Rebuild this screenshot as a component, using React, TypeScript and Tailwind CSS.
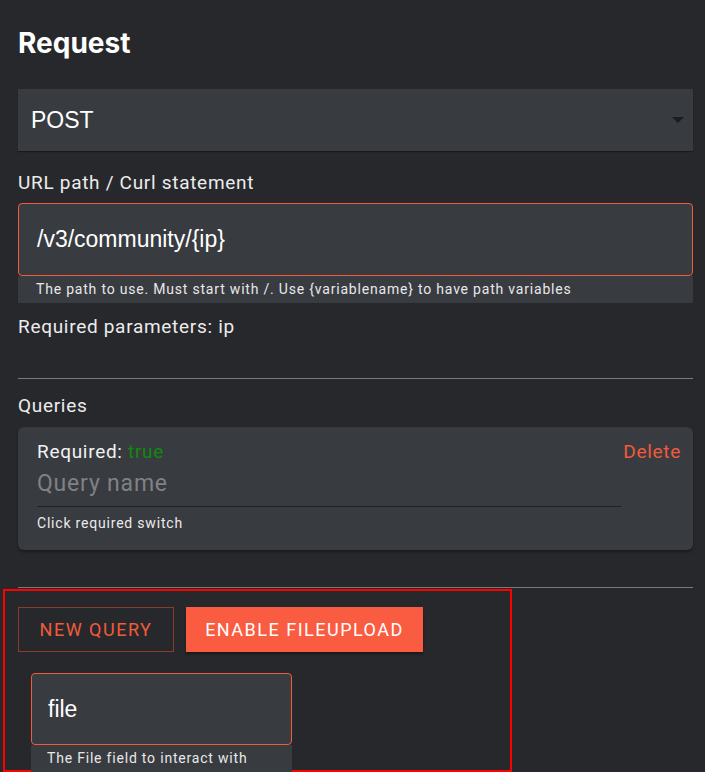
import React from "react";

export default function App() {
  return (
    <div className="min-h-[772px] w-[705px] overflow-hidden bg-[#27282c] text-[#f2f2f2]" style={{ fontFamily: "Roboto, 'Liberation Sans', sans-serif" }}>
      <div className="pl-[18px] pr-[12px] pt-[26px]">
        <h1 className="text-[28px] font-bold leading-[34px] text-white" style={{ fontFamily: "Inter, Roboto, sans-serif" }}>Request</h1>

        <div className="mt-[29px] flex h-[62px] items-center justify-between bg-[#383b40] pl-[13px] pr-[9px] shadow-[0_1px_1px_rgba(0,0,0,0.35)]">
          <span className="text-[23px] text-white" style={{ fontFamily: "'Liberation Sans', Arial, sans-serif" }}>POST</span>
          <svg width="12" height="6" viewBox="0 0 12 6"><path d="M0 0h12L6 6z" fill="#1c1d20" /></svg>
        </div>

        <div className="mt-[20px] text-[19px] leading-[24px] tracking-[0.7px] text-[#ececec]">URL path / Curl statement</div>

        <div className="mt-[8px]">
          <div className="flex h-[73px] items-center rounded-[4px] border border-[#f25a3b] bg-[#383b40] pl-[18px]">
            <span className="text-[23px] text-white" style={{ fontFamily: "'Liberation Sans', Arial, sans-serif" }}>/v3/community/{"{ip}"}</span>
          </div>
          <div className="flex h-[27px] items-center bg-[#383b40] pl-[18px] text-[14px] tracking-[0.8px] text-[#e8e8e8]">The path to use. Must start with /. Use {"{variablename}"} to have path variables</div>
        </div>

        <div className="mt-[12px] text-[19px] leading-[24px] tracking-[0.7px] text-[#ececec]">Required parameters: ip</div>

        <div className="mt-[39px] h-px bg-[#7a7a7a]" />

        <div className="mt-[15px] text-[19px] leading-[24px] tracking-[0.7px] text-[#ececec]">Queries</div>

        <div className="mt-[9px] h-[123px] rounded-[6px] bg-[#383b40] pl-[19px] pr-[12px] pt-[14px] shadow-[0_2px_3px_rgba(0,0,0,0.35)]">
          <div className="flex items-start justify-between">
            <div className="w-[584px]">
              <div className="text-[19px] leading-[22px] tracking-[0.7px] text-[#f2f2f2]">
                Required: <span className="text-[#0f8a0f]">true</span>
              </div>
              <div className="mt-[7px] border-b border-[#1f2023] pb-[8px] text-[23px] leading-[28px] tracking-[0.8px] text-[#808184]">Query name</div>
              <div className="mt-[7px] text-[14px] leading-[18px] tracking-[0.8px] text-[#ececec]">Click required switch</div>
            </div>
            <span className="text-[19px] leading-[22px] tracking-[0.7px] text-[#f25a3b]">Delete</span>
          </div>
        </div>

        <div className="mt-[37px] h-px bg-[#7a7a7a]" />

        <div className="-mx-[15px] mt-px h-[183px] w-[509px] border-2 border-[#ff0000] pl-[13px] pt-[16px]">
          <div className="flex gap-[12px]">
            <button className="h-[45px] w-[156px] border border-[#8d3a2c] text-[18px] tracking-[1.5px] text-[#f25a3b]">NEW QUERY</button>
            <button className="h-[45px] w-[237px] bg-[#f95c41] text-[18px] tracking-[1.5px] text-white shadow-[0_2px_2px_rgba(0,0,0,0.4)]">ENABLE FILEUPLOAD</button>
          </div>
          <div className="ml-[13px] mt-[21px] w-[261px]">
            <div className="flex h-[72px] items-center rounded-[4px] border border-[#f25a3b] bg-[#383b40] pl-[16px]">
              <span className="text-[23px] text-white" style={{ fontFamily: "'Liberation Sans', Arial, sans-serif" }}>file</span>
            </div>
            <div className="flex h-[27px] items-center bg-[#383b40] pl-[16px] text-[14px] tracking-[0.8px] text-[#e8e8e8]">The File field to interact with</div>
          </div>
        </div>
      </div>
    </div>
  );
}
